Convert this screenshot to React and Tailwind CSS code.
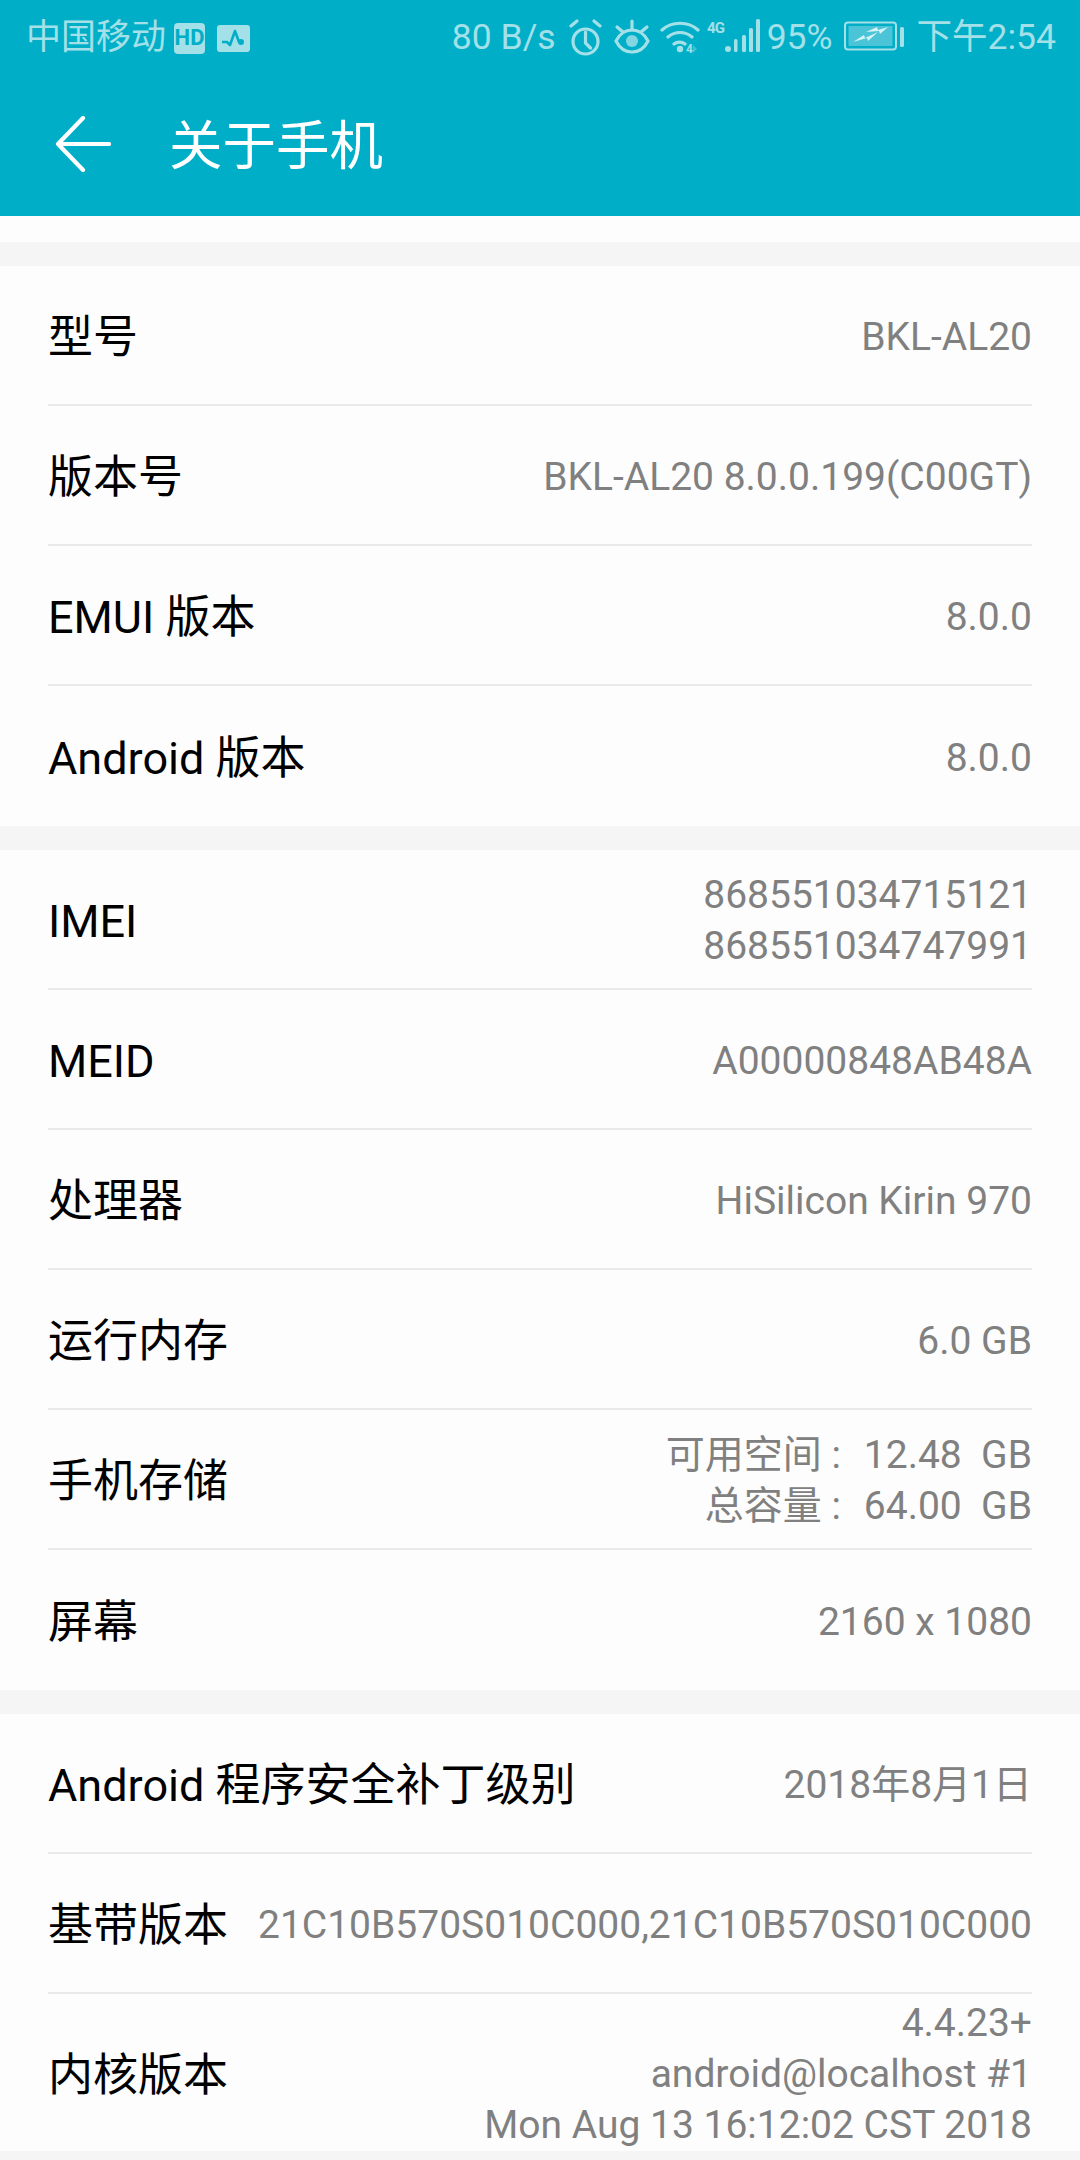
const font = { fontFamily: 'Roboto, "Noto Sans CJK SC", sans-serif' };

const sections = [
  [
    ["型号", ["BKL-AL20"]],
    ["版本号", ["BKL-AL20 8.0.0.199(C00GT)"]],
    ["EMUI 版本", ["8.0.0"]],
    ["Android 版本", ["8.0.0"]],
  ],
  [
    ["IMEI", ["868551034715121", "868551034747991"]],
    ["MEID", ["A00000848AB48A"]],
    ["处理器", ["HiSilicon Kirin 970"]],
    ["运行内存", ["6.0 GB"]],
    ["手机存储", ["可用空间 :\u2004 12.48  GB", "总容量 :\u2004 64.00  GB"]],
    ["屏幕", ["2160 x 1080"]],
  ],
  [
    ["Android 程序安全补丁级别", ["2018年8月1日"]],
    ["基带版本", ["21C10B570S010C000,21C10B570S010C000"]],
    ["内核版本", ["4.4.23+", "android@localhost #1", "Mon Aug 13 16:12:02 CST 2018"]],
  ],
];

const Row = ({ label, value, last }) => (
  <div className={`flex min-h-[140px] items-center justify-between ${last ? "" : "border-b-2 border-[#e9e9e9]"}`}>
    <span className="pt-[5px] text-[45px] leading-none text-black whitespace-nowrap">{label}</span>
    <div className="pt-[4px] text-right text-[39px] leading-[51px] text-[#808080] whitespace-pre">
      {value.map((line) => (
        <div key={line}>{line}</div>
      ))}
    </div>
  </div>
);

const StatusIcons = () => (
  <div className="flex items-center">
    <span>80 B/s</span>
    <svg width="34" height="38" viewBox="0 0 34 38" className="ml-[13px]" fill="none" stroke="#a3e0e8" strokeWidth="3.200" strokeLinecap="round" strokeLinejoin="round">
      <circle cx="16.500" cy="22.500" r="12.500" />
      <path d="M16.500 13v11l5 5M2 7l6-5M31 7l-6-5" />
    </svg>
    <svg width="36" height="38" viewBox="0 0 36 38" className="ml-[11px]" fill="none" stroke="#a3e0e8" strokeWidth="3.200" strokeLinecap="round">
      <path d="M2 22C6 14 12 11 18 11S30 14 34 22C30 30 24 33 18 33S6 30 2 22Z" />
      <circle cx="18" cy="22" r="6" fill="#a3e0e8" fillOpacity="0.8" stroke="none" />
      <path d="M18 2v9M3 8l6 5M33 8l-6 5" />
    </svg>
    <svg width="40" height="38" viewBox="0 0 40 38" className="ml-[10px]" fill="none" stroke="#a3e0e8" strokeWidth="3.200" strokeLinecap="round">
      <path d="M2 11c10-9 26-9 36 0M8 18c7-6 17-6 24 0M14 25c3-2.500 8-2.500 11 0" />
      <circle cx="20" cy="30" r="3.200" fill="#a3e0e8" stroke="none" />
      <text x="26" y="34" fontSize="12" fontWeight="700" fill="#a3e0e8" stroke="none" fontFamily="Roboto">4</text>
      <path d="M33 26l4 4-4 4Z" fill="#a3e0e8" fillOpacity="0.4" stroke="none" />
    </svg>
    <svg width="58" height="40" viewBox="0 0 58 40" className="ml-[4px]" fill="#a3e0e8">
      <text x="3" y="15" fontSize="15" fontWeight="700" fontFamily="Roboto" textLength="18">4G</text>
      <circle cx="24" cy="31" r="3" />
      <rect x="30" y="21" width="3.500" height="13" rx="1.500" />
      <rect x="38" y="17" width="4" height="17" rx="1.500" />
      <rect x="45" y="10" width="4" height="24" rx="1.500" />
      <rect x="52" y="1" width="4" height="33" rx="1.500" />
    </svg>
    <span className="ml-[5px]">95%</span>
    <svg width="60" height="34" viewBox="0 0 60 34" className="ml-[11px]" fill="none">
      <rect x="1" y="1.500" width="51" height="27" rx="3" stroke="#a3e0e8" strokeWidth="2" />
      <rect x="4.500" y="5" width="44" height="20" fill="#a3e0e8" fillOpacity="0.45" />
      <path d="M9 21 20 14 21 17 34 11 24 20 23 17Z" fill="#d5f3f7" />
      <path d="M22 11 33 6 34 9 44 6 36 13 35 10Z" fill="#d5f3f7" />
      <rect x="56" y="6" width="4" height="20" rx="1.500" fill="#a3e0e8" />
    </svg>
    <span className="ml-[13px]">下午2:54</span>
  </div>
);

export default function App() {
  return (
    <div className="flex h-[2160px] w-[1080px] flex-col overflow-hidden bg-[#f5f5f5]" style={font}>
      <div className="h-[216px] bg-[#00aec7]">
        <div className="flex h-[76px] items-center justify-between pl-[26px] pr-[24px] text-[35.500px] text-[#a3e0e8]">
          <div className="flex items-center">
            <span className="text-[35px]">中国移动</span>
            <div className="ml-[8px] flex h-[31px] w-[31px] items-center justify-center rounded-[4px] bg-[#a3e0e8] text-[22px] font-bold leading-none text-[#00aec7]">HD</div>
            <div className="ml-[12px] flex h-[27px] w-[33px] items-center justify-center rounded-[3px] bg-[#a3e0e8]">
              <svg width="27" height="20" viewBox="0 0 27 20" fill="none" stroke="#00aec7" strokeWidth="2.600" strokeLinejoin="round">
                <path d="M2 14h5l3 3 5-14 4 11" />
                <circle cx="21" cy="14" r="3" fill="#00aec7" stroke="none" />
              </svg>
            </div>
          </div>
          <StatusIcons />
        </div>
        <div className="flex h-[140px] items-center">
          <svg width="56" height="56" viewBox="0 0 56 56" className="mb-[4px] ml-[55px]" fill="none" stroke="#fff" strokeWidth="4.200" strokeLinecap="round" strokeLinejoin="round">
            <path d="M54 28H3M28 2 3 28l25 26" />
          </svg>
          <span className="ml-[58px] pt-[2px] text-[53.500px] leading-none text-white">关于手机</span>
        </div>
      </div>
      <div className="h-[26px] bg-[#fdfdfd]"></div>
      <div className="flex flex-col gap-[24px] pt-[24px]">
        {sections.map((rows) => (
          <div key={rows[0][0]} className="bg-[#fdfdfd] px-[48px]">
            {rows.map(([label, value], i) => (
              <Row key={label} label={label} value={value} last={i === rows.length - 1} />
            ))}
          </div>
        ))}
      </div>
    </div>
  );
}
